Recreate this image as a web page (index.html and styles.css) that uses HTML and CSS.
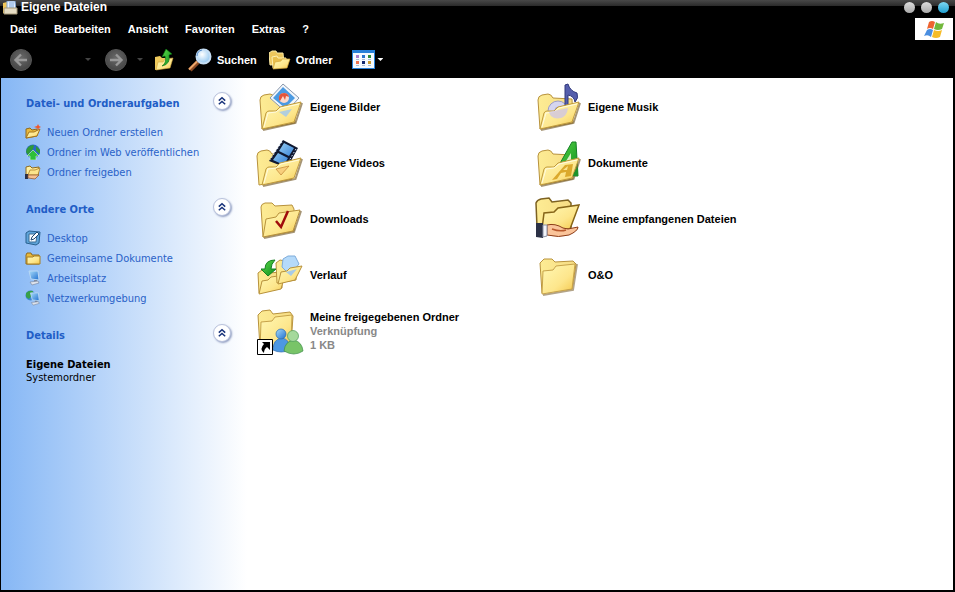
FILE: index.html
```
<!DOCTYPE html>
<html lang="de">
<head>
  <meta charset="UTF-8">
  <meta name="viewport" content="width=device-width, initial-scale=1.0">
  <title>Eigene Dateien</title>
  <link rel="stylesheet" href="styles.css">
</head>
<body>
  <!-- shared icon parts -->
  <svg class="defs" aria-hidden="true">
    <defs>
      <linearGradient id="gold" x1="0" y1="0" x2="1" y2="1">
        <stop offset="0" stop-color="#fff8b4"/>
        <stop offset=".6" stop-color="#fde68c"/>
        <stop offset="1" stop-color="#f4c648"/>
      </linearGradient>
      <linearGradient id="goldBack" x1="0" y1="0" x2="1" y2="0">
        <stop offset="0" stop-color="#fdec94"/>
        <stop offset="1" stop-color="#f6dc84"/>
      </linearGradient>
      <linearGradient id="blue" x1="0" y1="0" x2="1" y2="1">
        <stop offset="0" stop-color="#a8dcfa"/>
        <stop offset="1" stop-color="#1f6fd0"/>
      </linearGradient>
      <linearGradient id="green" x1="0" y1="0" x2="1" y2="1">
        <stop offset="0" stop-color="#5fdc4a"/>
        <stop offset="1" stop-color="#0b8a1c"/>
      </linearGradient>
      <radialGradient id="gray" cx="0.5" cy="0.4" r="0.6">
        <stop offset="0" stop-color="#6a6a6a"/>
        <stop offset="1" stop-color="#444"/>
      </radialGradient>
      <radialGradient id="lens" cx="0.4" cy="0.35" r="0.7">
        <stop offset="0" stop-color="#fff"/>
        <stop offset="1" stop-color="#8cc4f0"/>
      </radialGradient>
    </defs>
    <symbol id="back" viewBox="0 0 48 48">
      <path d="M6 46L4 17Q4 13 8 12L14 11Q17 11 19 15L38 16L39 40Z" fill="url(#goldBack)" stroke="#b8923c"/>
    </symbol>
    <symbol id="front" viewBox="0 0 48 48">
      <path d="M7 47L39.500 40L46 20" fill="none" stroke="#80683a" stroke-width="2" opacity=".7"/>
      <path d="M6 46L10 30Q11 28 13 28L20 28L24 24L45 19L38 39Z" fill="url(#gold)" stroke="#c09a3c"/>
      <path d="M8 44L12 30L20 29L25 25L43 21" fill="none" stroke="#fffbe0"/>
    </symbol>
    <symbol id="small-folder" viewBox="0 0 16 16">
      <path d="M1 14L1 5L2 3L6 3L7 5L14 5L14 14Z" fill="#e9b93c" stroke="#8f6a1c"/>
      <path d="M2 14L2 7L8 7L9 6L15 6L15 14Z" fill="url(#gold)" stroke="#a87e22"/>
    </symbol>
    <symbol id="monitor" viewBox="0 0 16 16">
      <path d="M4 1L13 1L14 10L6 9Z" fill="url(#blue)" stroke="#b8d8f4"/>
      <path d="M9 10L12 10L12 12L9 12Z" fill="#7e8ca0"/>
      <path d="M5 12L13 11L14 13L7 15Z" fill="#dfe4ec" stroke="#71809a" stroke-width=".6"/>
    </symbol>
    <symbol id="up" viewBox="0 0 10 10">
      <path d="M1 4.500L5 1L9 4.500M1 9L5 5.500L9 9" fill="none" stroke="#17327a" stroke-width="1.900"/>
    </symbol>
  </svg>

  <div class="window">
    <header class="titlebar">
      <svg class="title-icon" viewBox="0 0 16 14">
        <path d="M1 2L5 1L6 13L1 12Z" fill="#f2c85a"/>
        <path d="M5 0H13L14 9H5Z" fill="#e8f2ff" stroke="#7fa4d4"/>
        <path d="M7 2H12M7 4H12M7 6H12" stroke="#78a4dc"/>
        <path d="M2 7H15V13H2Z" fill="#e5dcc4" stroke="#a59878"/>
      </svg>
      <h1>Eigene Dateien</h1>
      <div class="controls">
        <button class="dot" aria-label="Minimieren"></button>
        <button class="dot" aria-label="Maximieren"></button>
        <button class="dot close" aria-label="Schließen"></button>
      </div>
    </header>

    <nav class="menubar">
      <button>Datei</button>
      <button>Bearbeiten</button>
      <button>Ansicht</button>
      <button>Favoriten</button>
      <button>Extras</button>
      <button>?</button>
      <div class="logo">
        <svg viewBox="0 0 20 18">
          <path d="M5 2Q8 0 11 2L9 9Q6 7 3 9Z" fill="#ee6430"/>
          <path d="M12 2Q15 5 20 3L18 9Q14 11 10 9Z" fill="#72b83c"/>
          <path d="M3 10Q6 8 9 10L7 17Q4 14 0 16Z" fill="#4a8ee0"/>
          <path d="M10 10Q14 12 18 10L16 17Q12 19 8 17Z" fill="#f6bc28"/>
        </svg>
      </div>
    </nav>

    <div class="toolbar">
      <button aria-label="Zurück">
        <svg class="round" viewBox="0 0 22 22"><circle cx="11" cy="11" r="10.500" fill="url(#gray)" stroke="#555"/><path d="M17 11H6M11 5.500L5.500 11L11 16.500" fill="none" stroke="#999" stroke-width="2.400"/></svg>
      </button>
      <button class="drop dim back-drop" aria-label="Verlauf zurück"></button>
      <button aria-label="Vorwärts">
        <svg class="round" viewBox="0 0 22 22"><circle cx="11" cy="11" r="10.500" fill="url(#gray)" stroke="#555"/><path d="M5 11H16M11 5.500L16.500 11L11 16.500" fill="none" stroke="#999" stroke-width="2.400"/></svg>
      </button>
      <button class="drop dim" aria-label="Verlauf vorwärts"></button>
      <button class="up-btn" aria-label="Aufwärts">
        <svg class="up-icon" viewBox="0 0 20 22">
          <path d="M1 21V8L6 7L8 9L16 9V18Z" fill="#eec95c"/>
          <path d="M2 21L4 13L9 13L11 10L19 9L16 19Z" fill="url(#gold)" stroke="#d0a53c" stroke-width=".6"/>
          <path d="M8 17Q13 14 11 7L8 8L12 0L18 5L15 6Q17 15 8 17Z" fill="url(#green)" stroke="#087010" stroke-width=".6"/>
        </svg>
      </button>
      <button class="tool search">
        <svg class="search-icon" viewBox="0 0 24 24">
          <path d="M10 14L2 22" stroke="#8a4a24" stroke-width="4.500"/>
          <path d="M9 13.500L1 21.500" stroke="#eda66a" stroke-width="2"/>
          <circle cx="15.500" cy="8.500" r="7" fill="url(#lens)" stroke="#c6def4" stroke-width="2"/>
          <path d="M9 8Q9 3 14 2" fill="none" stroke="#3b78c0" stroke-width=".8"/>
        </svg>
        Suchen
      </button>
      <button class="tool folders">
        <svg class="folders-icon" viewBox="0 0 22 20">
          <path d="M1 15L0 3L3 1L7 1L8 3L14 3L15 14Z" fill="#edc65c" stroke="#fbe9a4"/>
          <path d="M4 18L3 7L8 6L9 8L17 8L17 17Z" fill="#e9bf4c" stroke="#fff0b0"/>
          <path d="M4 19L6 12L12 11L13 9L21 9L18 18Z" fill="url(#gold)" stroke="#d5a738" stroke-width=".7"/>
        </svg>
        Ordner
      </button>
      <button class="views" aria-label="Ansichten">
        <svg class="views-icon" viewBox="0 0 23 19">
          <path d="M0 0H23V19H0Z" fill="#2680d8"/>
          <path d="M1 3H22V18H1Z" fill="#f4faff"/>
          <path d="M4 5H7V8H4Z" fill="#a77ed0"/><path d="M10 5H13V8H10Z" fill="#2874cc"/><path d="M16 5H19V8H16Z" fill="#2c8a38"/>
          <path d="M4 11H7V14H4Z" fill="#ee7450"/><path d="M10 11H13V14H10Z" fill="#142a70"/><path d="M16 11H19V14H16Z" fill="#c89a30"/>
          <path d="M4 9.500H7M10 9.500H13M16 9.500H19M4 15.500H7M10 15.500H13M16 15.500H19" stroke="#a9bdd4"/>
        </svg>
        <span class="drop"></span>
      </button>
    </div>

    <div class="content">
      <aside class="sidebar">
        <section>
          <div class="head">
            <h2>Datei- und Ordneraufgaben</h2>
            <button class="chevron" aria-label="Einklappen"><svg><use href="#up"/></svg></button>
          </div>
          <ul>
            <li><a href="#">
              <svg viewBox="0 0 16 16"><path d="M1 14V5L5 4L7 6L12 5V12Z" fill="#e9b93c" stroke="#8f6a1c"/><path d="M1 14L4 8L9 8L15 5L12 12Z" fill="url(#gold)" stroke="#a4741c"/><path d="M13 0L14 2L16 3L14 4L13 6L12 4L9 3L12 2Z" fill="#f0582c"/></svg>
              Neuen Ordner erstellen</a></li>
            <li><a href="#">
              <svg viewBox="0 0 16 16"><circle cx="8" cy="7.500" r="7" fill="#2b68c8"/><path d="M1 8Q2 1 9 1L8 5L5 8L3 11ZM11 2L15 6V10L11 7Z" fill="#2f9a38"/><path d="M8 6L14 12H11V16H5V12H2Z" fill="#2fc038" stroke="#d8f4d8" stroke-width=".6"/></svg>
              Ordner im Web veröffentlichen</a></li>
            <li><a href="#">
              <svg viewBox="0 0 16 16"><path d="M1 11V3L5 2L7 4L14 3L13 11Z" fill="url(#gold)" stroke="#8f6a1c"/><path d="M3 11L5 6L10 6L15 4L13 11Z" fill="#fbe48c" stroke="#a4741c" stroke-width=".7"/><path d="M0 10H3V15H0Z" fill="#2a2f48"/><path d="M3 11L7 11L14 11L10 15L3 14Z" fill="#f6c090" stroke="#8c5028" stroke-width=".7"/></svg>
              Ordner freigeben</a></li>
          </ul>
        </section>

        <section>
          <div class="head">
            <h2>Andere Orte</h2>
            <button class="chevron" aria-label="Einklappen"><svg><use href="#up"/></svg></button>
          </div>
          <ul>
            <li><a href="#">
              <svg viewBox="0 0 16 16"><path d="M1 3L4 1L15 2L14 13L11 15L1 13Z" fill="#5ea4da" stroke="#28608e"/><path d="M4 4L12 4L11 12L4 12Z" fill="#f8fbff" stroke="#3a6c94"/><path d="M6 10L7 7L12 2L14 4L9 9Z" fill="#fff" stroke="#1f4870"/></svg>
              Desktop</a></li>
            <li><a href="#"><svg><use href="#small-folder"/></svg>Gemeinsame Dokumente</a></li>
            <li><a href="#"><svg><use href="#monitor"/></svg>Arbeitsplatz</a></li>
            <li><a href="#">
              <svg viewBox="0 0 16 16"><circle cx="5.500" cy="5.500" r="5" fill="#3c86d4"/><path d="M1 3Q4 0 8 1L7 5L4 9L1 7Z" fill="#38a048"/><use href="#monitor" x="2" y="2" width="14" height="14"/></svg>
              Netzwerkumgebung</a></li>
          </ul>
        </section>

        <section>
          <div class="head">
            <h2>Details</h2>
            <button class="chevron" aria-label="Einklappen"><svg><use href="#up"/></svg></button>
          </div>
          <p class="details"><strong>Eigene Dateien</strong><br>Systemordner</p>
        </section>
      </aside>

      <main class="files">
        <a class="item" href="#">
          <svg viewBox="0 0 48 48">
            <use href="#back"/>
            <path d="M27 1L43 15L30 29L14 15Z" fill="#f2f6fb" stroke="#8a98ac"/>
            <path d="M27 4L39 15L29 25L17 15Z" fill="#4b9ae2"/>
            <circle cx="28" cy="15" r="5" fill="#fbd9cc"/>
            <path d="M23 17Q22 10 28 10Q32 10 33 14L30 13L29 17L27 13L24 18Z" fill="#e2563c"/>
            <use href="#front"/>
            <path d="M23 29L36 26L30 34Z" fill="#a9cbe6" opacity=".9"/>
          </svg>
          <span>Eigene Bilder</span>
        </a>
        <a class="item" href="#">
          <svg viewBox="0 0 48 48">
            <use href="#back"/>
            <circle cx="24" cy="28" r="10" fill="#d5d5f0" stroke="#9c9cc8"/>
            <circle cx="24" cy="27" r="3" fill="#fff" stroke="#aaa8d0"/>
            <path d="M31 29V2L34 1Q36 8 43 10Q45 15 41 19Q40 13 34 12V29Z" fill="#555eac" stroke="#30387c"/>
            <use href="#front"/>
            <path d="M15 29Q17 37 27 35Q33 33 34 25Z" fill="#cfc5e2" opacity=".8"/>
          </svg>
          <span>Eigene Musik</span>
        </a>
        <a class="item" href="#">
          <svg viewBox="0 0 48 48">
            <use href="#back" x="-3" y="0"/>
            <path d="M27 1L42 9L31 29L13 22Z" fill="#101830"/>
            <path d="M28 4L38 9L33 17L23 12ZM22 14L32 19L28 26L17 21Z" fill="url(#blue)"/>
            <path d="M26 3L14 21M40 10L30 27" stroke="#dcecff" stroke-dasharray="1.500 2"/>
            <use href="#front"/>
            <path d="M20 30L33 27L25 36Z" fill="#f8cf7c" stroke="#c08432" stroke-width=".7"/>
          </svg>
          <span>Eigene Videos</span>
        </a>
        <a class="item" href="#">
          <svg viewBox="0 0 48 48">
            <use href="#back"/>
            <path d="M38 3L42 3L44 37L37 37L37 28L29 30L24 35L20 35Z" fill="url(#green)" stroke="#168026"/>
            <path d="M37 14L37 21L32 22Z" fill="#d9efc4"/>
            <use href="#front"/>
            <path d="M18 41L23 40L27 34L32 33L31 38L37 37L39 25L31 26Z" fill="#dba92c"/>
            <path d="M29 31L34 27L33 31Z" fill="#fbe48c"/>
            <path d="M40 34L44 28V37H39Z" fill="#1d922c"/>
          </svg>
          <span>Dokumente</span>
        </a>
        <a class="item" href="#">
          <svg viewBox="0 0 48 48">
            <path d="M7 42L5 12Q5 9 9 8L16 8L19 11L36 10L38 14L38 36Z" fill="url(#goldBack)" stroke="#b8923c"/>
            <path d="M8 43L38 37L45 16" fill="none" stroke="#80683a" stroke-width="2" opacity=".7"/>
            <path d="M7 42L10 24L20 22L23 18L44 15L37 36Z" fill="url(#gold)" stroke="#b8923c"/>
            <path d="M20 26L25 32L32 16" fill="none" stroke="#a00c0c" stroke-width="2.500"/>
          </svg>
          <span>Downloads</span>
        </a>
        <a class="item" href="#">
          <svg viewBox="0 0 48 48">
            <path d="M3 32L2 8Q3 5 7 4L15 3L18 7L34 5L37 8L37 32Z" fill="url(#goldBack)" stroke="#7d6222" stroke-width="1.500"/>
            <path d="M8 34L10 18L20 17L24 13L45 10L36 34Z" fill="url(#gold)" stroke="#866518" stroke-width="1.500"/>
            <path d="M13 30Q21 28 29 33L34 34L44 32Q44 36 35 40Q25 43 13 40Z" fill="#fac49a" stroke="#8c3c18"/>
            <path d="M18 34Q26 37 32 35" fill="none" stroke="#b8582c" stroke-width="1.500"/>
            <path d="M2 28L9 28V43L2 42Z" fill="#2b3146"/>
            <path d="M9 30H13V41L9 42Z" fill="#f2f4fa" stroke="#8c92a6"/>
          </svg>
          <span>Meine empfangenen Dateien</span>
        </a>
        <a class="item" href="#">
          <svg viewBox="0 0 48 48">
            <path d="M3 42L2 22L6 19L11 19L13 22L26 21L26 37Z" fill="url(#goldBack)" stroke="#b8923c"/>
            <path d="M3 43L6 30L12 29L15 26L29 24L25 38Z" fill="url(#gold)" stroke="#b8923c"/>
            <path d="M21 32L20 12L24 9L29 10L31 13L41 12L40 29Z" fill="url(#goldBack)" stroke="#b8923c"/>
            <path d="M27 8L32 5L39 5L43 13L34 24L26 16Z" fill="#b5dafa" stroke="#7facda"/>
            <path d="M22 33L25 21L31 20L34 17L46 15L39 29Z" fill="url(#gold)" stroke="#b8923c"/>
            <path d="M30 21L41 18L35 25Z" fill="#a9cbe6"/>
            <path d="M19 9Q9 9 9 18L5 18L12 25L20 18L15 18Q15 13 19 9Z" fill="url(#green)" stroke="#158022"/>
          </svg>
          <span>Verlauf</span>
        </a>
        <a class="item" href="#">
          <svg viewBox="0 0 48 48">
            <path d="M9 44L39 39L43 13" fill="none" stroke="#80683a" stroke-width="2" opacity=".6"/>
            <path d="M8 42L6 12L10 8L18 8L21 11L39 10L42 13L38 38Z" fill="url(#goldBack)" stroke="#b8923c"/>
            <path d="M8 43L9 20L19 19L22 15L41 13L38 38Z" fill="url(#gold)" stroke="#c7a34a"/>
          </svg>
          <span>O&amp;O</span>
        </a>
        <a class="item" href="#">
          <svg viewBox="0 0 48 48">
            <path d="M4 41L2 8L6 4L14 3L17 7L34 5L37 9L35 38Z" fill="url(#goldBack)" stroke="#b8923c"/>
            <path d="M4 42L5 15L16 14L19 10L36 8L35 36Z" fill="url(#gold)" stroke="#c7a34a"/>
            <path d="M17 43Q17 32 26 31Q34 32 34 43Q25 47 17 43Z" fill="#4d98e2" stroke="#2b68ac" stroke-width=".7"/>
            <circle cx="25" cy="27" r="5" fill="url(#blue)" stroke="#2b68ac" stroke-width=".7"/>
            <path d="M28 44Q29 34 38 33Q46 35 47 44Q38 50 28 44Z" fill="#78c468" stroke="#3c8c48" stroke-width=".7"/>
            <circle cx="37" cy="29" r="5.500" fill="#a5d99c" stroke="#4b9a58" stroke-width=".7"/>
            <path d="M1.500 32.500H16.500V47.500H1.500Z" fill="#fff" stroke="#000"/>
            <path d="M6 35H14V43L11 40Q8 42 8 46Q3 42 8 37Z" fill="#000"/>
          </svg>
          <span>Meine freigegebenen Ordner<small>Verknüpfung</small><small>1 KB</small></span>
        </a>
      </main>
    </div>
  </div>
</body>
</html>
```
FILE: styles.css
```
* {
  box-sizing: border-box;
}
body {
  margin: 0;
  background: #000;
  font-family: "Liberation Sans", Arial, sans-serif;
  font-size: 11px;
}
h1, h2, p, ul {
  margin: 0;
  padding: 0;
}
ul {
  list-style: none;
}
a {
  text-decoration: none;
}
button {
  padding: 0;
  border: none;
  background: none;
  color: inherit;
  font: inherit;
}
svg {
  display: block;
  flex: none;
}
.defs {
  position: absolute;
  width: 0;
  height: 0;
}
.window {
  display: flex;
  flex-direction: column;
  min-height: 100vh;
  padding: 0 2px 2px 1px;
  background: #000;
  color: #fff;
}

/* title bar */
.titlebar {
  display: flex;
  align-items: center;
  height: 15px;
  margin: 0 -2px 0 -1px;
  padding: 0 6px 0 2px;
  background: linear-gradient(#484848, #2a2a2a 6px, #000 6px);
}
.title-icon {
  width: 16px;
  height: 14px;
}
.titlebar h1 {
  margin-left: 3px;
  font-size: 12px;
  line-height: 15px;
}
.controls {
  display: flex;
  gap: 6px;
  margin-left: auto;
}
.dot {
  width: 11px;
  height: 11px;
  border-radius: 50%;
  background: linear-gradient(#ddd, #aaa);
}
.dot.close {
  background: linear-gradient(#7cd8f4, #22a0d0);
}

/* menu */
.menubar {
  display: flex;
  align-items: center;
  gap: 17px;
  height: 28px;
  padding-left: 9px;
  font-weight: bold;
}
.logo {
  display: flex;
  justify-content: center;
  align-items: center;
  width: 38px;
  height: 22px;
  margin-left: auto;
  background: #fff;
}
.logo svg {
  width: 20px;
  height: 18px;
}

/* toolbar */
.toolbar {
  display: flex;
  align-items: center;
  height: 35px;
  padding: 0 0 2px 9px;
  font-weight: bold;
}
.round {
  width: 22px;
  height: 22px;
}
.drop {
  width: 6px;
  height: 3px;
  background: #fff;
  clip-path: polygon(0 0, 100% 0, 50% 100%);
}
.dim {
  margin-left: 10px;
  background: #444;
}
.back-drop {
  margin: 0 14px 0 53px;
}
.up-btn {
  margin-left: 11px;
}
.up-icon {
  width: 20px;
  height: 22px;
}
.tool {
  display: flex;
  align-items: center;
  gap: 5px;
}
.search {
  margin-left: 14px;
}
.search-icon {
  width: 24px;
  height: 24px;
}
.folders {
  margin-left: 12px;
}
.folders-icon {
  width: 22px;
  height: 20px;
}
.views {
  display: flex;
  align-items: center;
  gap: 2px;
  margin-left: 20px;
}
.views-icon {
  width: 23px;
  height: 19px;
}

.content {
  display: flex;
  flex: 1;
  background: #fff;
  color: #000;
}

/* task pane */
.sidebar {
  flex: none;
  width: 246px;
  padding: 14px 16px 14px 25px;
  background: linear-gradient(to right, #86b7f5, #fff);
  font-family: "DejaVu Sans Condensed", Tahoma, sans-serif;
  font-size: 11px;
}
.sidebar section {
  margin-bottom: 16px;
}
.head {
  display: flex;
  justify-content: space-between;
  height: 24px;
}
.head h2 {
  color: #215dc6;
  font-size: 11px;
  line-height: 24px;
}
.chevron {
  display: flex;
  justify-content: center;
  align-items: center;
  width: 18px;
  height: 18px;
  border: 1px solid #b9c2dc;
  border-radius: 50%;
  background: #fff;
  box-shadow: 1px 1px 2px #8f9cc0;
}
.chevron svg {
  width: 8px;
  height: 10px;
}
.sidebar ul {
  padding-top: 6px;
}
.sidebar a {
  display: flex;
  align-items: center;
  gap: 6px;
  height: 20px;
  color: #2a62c8;
}
.sidebar a svg {
  width: 16px;
  height: 16px;
  margin-left: -1px;
}
.details {
  padding-top: 10px;
  line-height: 13px;
}

/* files */
.files {
  flex: 1;
  display: grid;
  grid-template-columns: repeat(auto-fill, 278px);
  grid-auto-rows: 48px;
  align-content: start;
  row-gap: 8px;
  padding: 5px 0 5px 9px;
}
.item {
  display: flex;
  align-items: center;
  gap: 6px;
  color: #000;
  font-weight: bold;
  line-height: 14px;
}
.item svg {
  width: 48px;
  height: 48px;
}
.item small {
  display: block;
  color: #888;
  font-size: 11px;
}
```
